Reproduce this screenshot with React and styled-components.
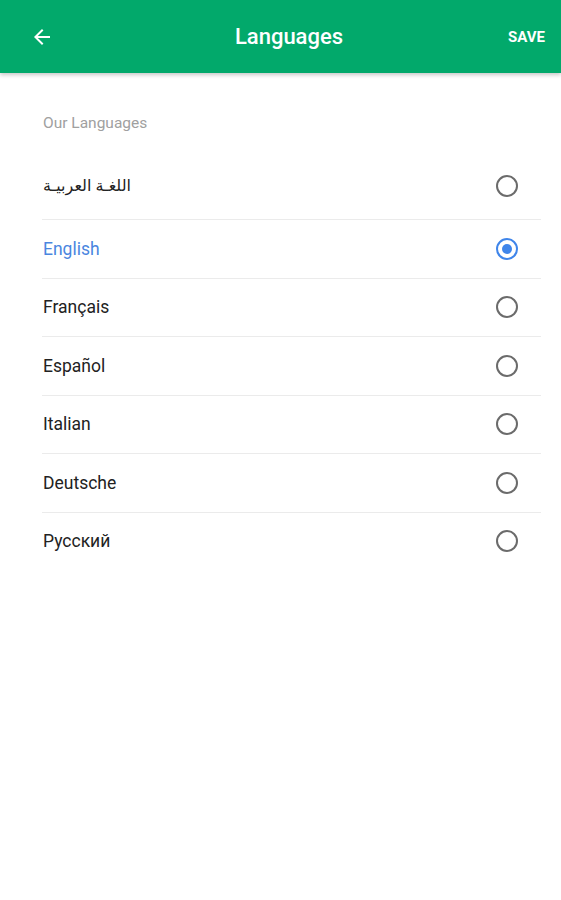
import React, { useState } from 'react';
import styled, { createGlobalStyle } from 'styled-components';

const GlobalStyle = createGlobalStyle`
  body {
    margin: 0;
    background: #fff;
    font-family: Roboto, "DejaVu Sans", sans-serif;
  }
`;

const Page = styled.div`
  min-height: 900px;
  background: #fff;
`;

const Toolbar = styled.header`
  height: 73px;
  background: #02a96b;
  display: grid;
  grid-template-columns: 80px 1fr 80px;
  align-items: center;
  box-shadow: 0 2px 4px rgba(0, 0, 0, 0.22);
  color: #fff;
`;

const BackButton = styled.button`
  background: none;
  border: 0;
  padding: 0;
  margin-left: 30px;
  width: 24px;
  height: 24px;
  display: flex;
  color: #fff;
`;

const Title = styled.h1`
  margin: 0;
  padding-left: 17px;
  text-align: center;
  font-size: 22px;
  font-weight: 500;
`;

const SaveButton = styled.button`
  background: none;
  border: 0;
  color: #fff;
  font-family: inherit;
  font-size: 15px;
  font-weight: 700;
  justify-self: end;
  margin-right: 16px;
  padding: 0;
`;

const Content = styled.main`
  padding: 0 20px 0 42px;
`;

const SectionLabel = styled.div`
  margin-top: 41px;
  margin-bottom: 19px;
  font-size: 15.5px;
  line-height: 19px;
  color: #a0a0a0;
  padding-left: 1px;
`;

const Row = styled.label`
  height: 57.5px;
  display: flex;
  align-items: center;
  justify-content: space-between;
  border-bottom: 1px solid #ebebeb;
  cursor: pointer;
  &:first-of-type {
    height: 67px;
  }
  &:last-child {
    border-bottom: 0;
  }
`;

const Name = styled.span`
  font-size: ${(p) => (p.$rtl ? '16px' : '17.5px')};
  padding-left: 1px;
  color: ${(p) => (p.$active ? '#4a86e0' : '#222')};
`;

const Radio = styled.span`
  width: 22px;
  height: 22px;
  margin-right: 23px;
  box-sizing: border-box;
  border-radius: 50%;
  border: 2px solid ${(p) => (p.$checked ? '#3f85ea' : '#6b6b6b')};
  display: flex;
  align-items: center;
  justify-content: center;
  &::after {
    content: '';
    width: 10px;
    height: 10px;
    border-radius: 50%;
    background: #3f85ea;
    display: ${(p) => (p.$checked ? 'block' : 'none')};
  }
`;

const languages = [
  { id: 'ar', name: 'اللغـة العربيـة', rtl: true },
  { id: 'en', name: 'English' },
  { id: 'fr', name: 'Français' },
  { id: 'es', name: 'Español' },
  { id: 'it', name: 'Italian' },
  { id: 'de', name: 'Deutsche' },
  { id: 'ru', name: 'Русский' },
];

export default function App() {
  const [selected, setSelected] = useState('en');

  return (
    <Page>
      <GlobalStyle />
      <Toolbar>
        <BackButton aria-label="Back">
          <svg width="24" height="24" viewBox="0 0 24 24" fill="currentColor">
            <path d="M20 11H7.83l5.59-5.59L12 4l-8 8 8 8 1.41-1.41L7.83 13H20v-2z" />
          </svg>
        </BackButton>
        <Title>Languages</Title>
        <SaveButton>SAVE</SaveButton>
      </Toolbar>
      <Content>
        <SectionLabel>Our Languages</SectionLabel>
        {languages.map((lang) => (
          <Row key={lang.id} onClick={() => setSelected(lang.id)}>
            <Name
              $active={selected === lang.id}
              $rtl={lang.rtl}
              dir={lang.rtl ? 'rtl' : undefined}
            >
              {lang.name}
            </Name>
            <Radio $checked={selected === lang.id} />
          </Row>
        ))}
      </Content>
    </Page>
  );
}
